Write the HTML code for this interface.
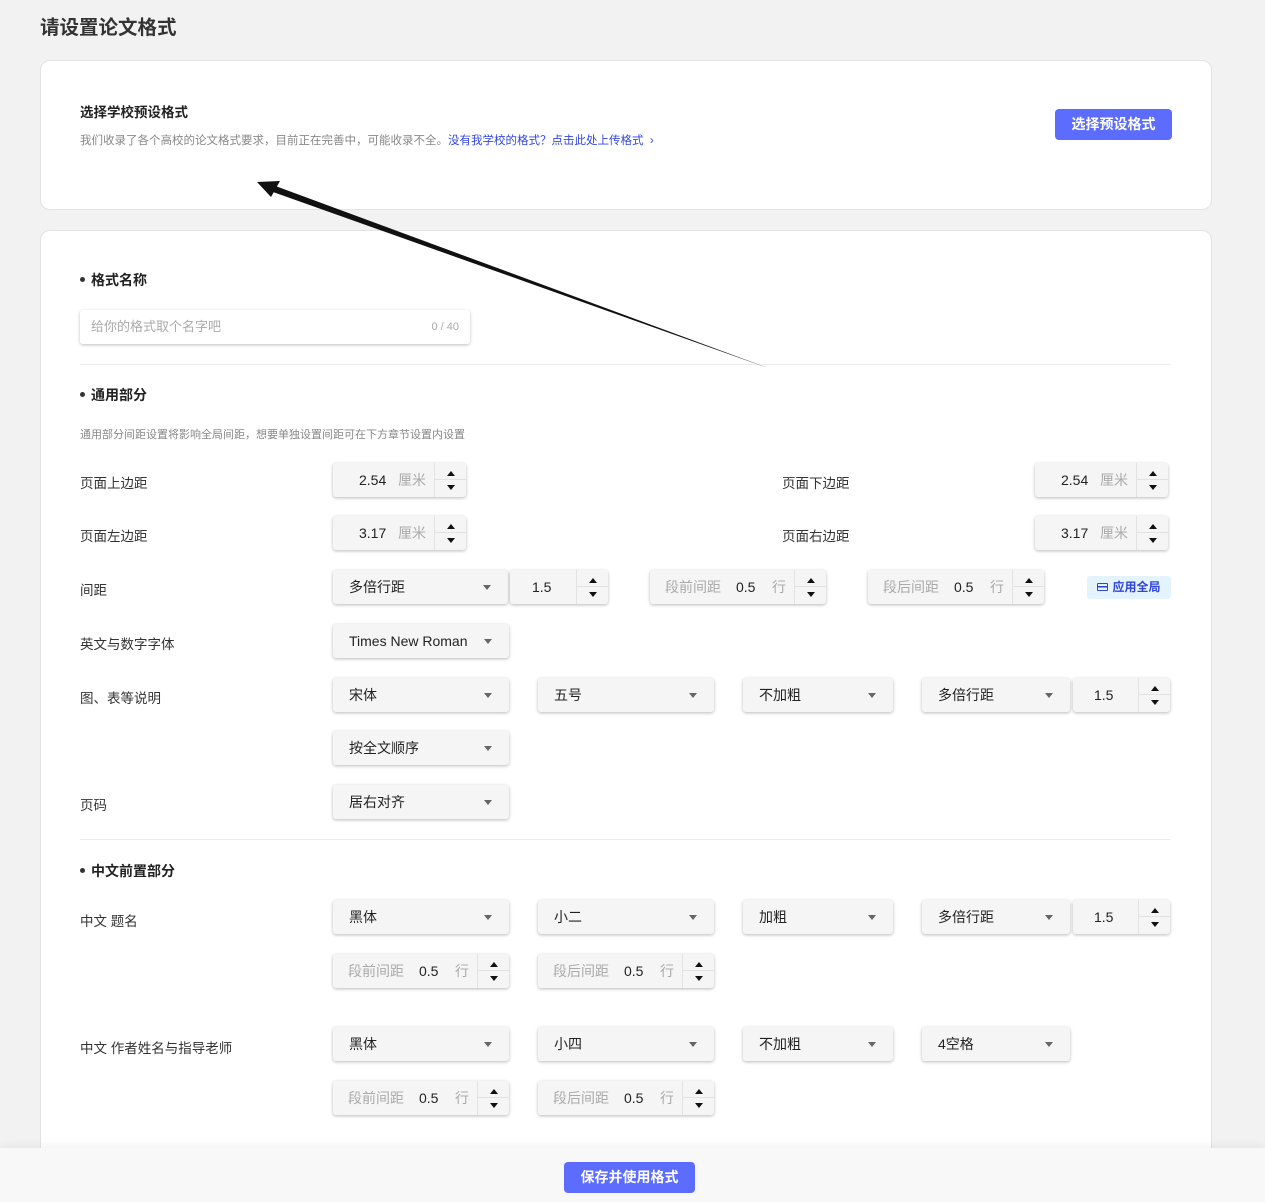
<!DOCTYPE html>
<html><head><meta charset="utf-8">
<style>
*{margin:0;padding:0;box-sizing:border-box}
html{width:1265px;height:1202px;overflow:hidden}
body{width:1265px;height:1202px;background:#f2f2f2;font-family:"Liberation Sans","Noto Sans CJK SC",sans-serif;position:relative;overflow:hidden;color:#333}
.a{position:absolute;white-space:nowrap}
.card{position:absolute;background:#fff;border:1px solid #e3e3e3;border-radius:10px}
.c{position:absolute;height:34px;background:#f5f5f5;box-shadow:0 1px 3px rgba(0,0,0,.28);border-radius:3px;font-size:14px;line-height:34px;color:#222;white-space:nowrap}
.s{padding-left:16px}
.s:after{content:"";position:absolute;right:17px;top:15px;border-left:4px solid transparent;border-right:4px solid transparent;border-top:5px solid #666}
.ar{position:absolute;right:0;top:0;width:32px;height:34px;border-left:1px solid #e2e2e2}
.ar:before{content:"";position:absolute;left:12px;top:8px;border-left:4px solid transparent;border-right:4px solid transparent;border-bottom:5px solid #111}
.ar:after{content:"";position:absolute;left:12px;top:22px;border-left:4px solid transparent;border-right:4px solid transparent;border-top:5px solid #111}
.ar i{position:absolute;left:0;right:0;top:16px;border-top:1px solid #e2e2e2}
.g{color:#aaa}
.lbl{position:absolute;left:80px;font-size:13.5px;color:#333;white-space:nowrap}
.h{position:absolute;left:80px;font-size:14px;font-weight:bold;color:#222}
.h:before{content:"";display:inline-block;width:5px;height:5px;border-radius:50%;background:#333;margin-right:6px;vertical-align:middle;position:relative;top:-2px}
.hr{position:absolute;left:80px;width:1091px;border-top:1px solid #ececec}
.btn{position:absolute;background:#5b6cff;color:#fff;font-weight:bold;font-size:14px;text-align:center;border-radius:4px}
</style></head><body>
<div class="a" style="left:40px;top:11px;font-size:19.5px;font-weight:bold;color:#333">请设置论文格式</div>

<div class="card" style="left:40px;top:60px;width:1172px;height:150px"></div>
<div class="a" style="left:80px;top:101px;font-size:13.5px;font-weight:bold;color:#222">选择学校预设格式</div>
<div class="a" style="left:80px;top:132px;font-size:11.5px;color:#888">我们收录了各个高校的论文格式要求，目前正在完善中，可能收录不全。<span style="color:#3346e0">没有我学校的格式？点击此处上传格式 &nbsp;›</span></div>
<div class="btn" style="left:1055px;top:109px;width:117px;height:31px;line-height:31px">选择预设格式</div>

<div class="card" style="left:40px;top:230px;width:1172px;height:985px"></div>

<div class="h" style="top:270px">格式名称</div>
<div class="a" style="left:80px;top:310px;width:390px;height:34px;background:#fff;border-radius:3px;box-shadow:0 1px 3px rgba(0,0,0,.25);font-size:13px;line-height:34px;color:#aaa;padding-left:11px">给你的格式取个名字吧<span style="position:absolute;right:11px;font-size:11px">0 / 40</span></div>
<div class="hr" style="top:364px"></div>

<div class="h" style="top:385px">通用部分</div>
<div class="a" style="left:80px;top:426px;font-size:11px;color:#888">通用部分间距设置将影响全局间距，想要单独设置间距可在下方章节设置内设置</div>

<div class="lbl" style="top:472px">页面上边距</div>
<div class="c" style="left:333px;top:463px;width:133px"><span class="a" style="left:26px">2.54</span><span class="a g" style="left:65px">厘米</span><div class="ar"><i></i></div></div>
<div class="lbl" style="left:782px;top:472px">页面下边距</div>
<div class="c" style="left:1035px;top:463px;width:133px"><span class="a" style="left:26px">2.54</span><span class="a g" style="left:65px">厘米</span><div class="ar"><i></i></div></div>

<div class="lbl" style="top:525px">页面左边距</div>
<div class="c" style="left:333px;top:516px;width:133px"><span class="a" style="left:26px">3.17</span><span class="a g" style="left:65px">厘米</span><div class="ar"><i></i></div></div>
<div class="lbl" style="left:782px;top:525px">页面右边距</div>
<div class="c" style="left:1035px;top:516px;width:133px"><span class="a" style="left:26px">3.17</span><span class="a g" style="left:65px">厘米</span><div class="ar"><i></i></div></div>

<div class="lbl" style="top:579px">间距</div>
<div class="c s" style="left:333px;top:570px;width:175px">多倍行距</div>
<div class="c" style="left:510px;top:570px;width:98px"><span class="a" style="left:22px">1.5</span><div class="ar"><i></i></div></div>
<div class="c" style="left:650px;top:570px;width:176px"><span class="a g" style="left:15px">段前间距</span><span class="a" style="left:86px">0.5</span><span class="a g" style="left:122px">行</span><div class="ar"><i></i></div></div>
<div class="c" style="left:868px;top:570px;width:176px"><span class="a g" style="left:15px">段后间距</span><span class="a" style="left:86px">0.5</span><span class="a g" style="left:122px">行</span><div class="ar"><i></i></div></div>
<div class="a" style="left:1087px;top:576px;width:84px;height:23px;background:#e4f4ff;border-radius:3px;color:#2f44d8;font-size:12px;font-weight:bold;line-height:23px;text-align:center"><span style="display:inline-block;width:11px;height:8px;border:1.5px solid #2f44d8;border-radius:1px;margin-right:4px;vertical-align:middle;position:relative;top:-1px;background:linear-gradient(#2f44d8,#2f44d8) center/100% 1.5px no-repeat"></span>应用全局</div>

<div class="lbl" style="top:633px">英文与数字字体</div>
<div class="c s" style="left:333px;top:624px;width:176px">Times New Roman</div>

<div class="lbl" style="top:687px">图、表等说明</div>
<div class="c s" style="left:333px;top:678px;width:176px">宋体</div>
<div class="c s" style="left:538px;top:678px;width:176px">五号</div>
<div class="c s" style="left:743px;top:678px;width:150px">不加粗</div>
<div class="c s" style="left:922px;top:678px;width:148px">多倍行距</div>
<div class="c" style="left:1073px;top:678px;width:97px"><span class="a" style="left:21px">1.5</span><div class="ar"><i></i></div></div>

<div class="c s" style="left:333px;top:731px;width:176px">按全文顺序</div>

<div class="lbl" style="top:794px">页码</div>
<div class="c s" style="left:333px;top:785px;width:176px">居右对齐</div>
<div class="hr" style="top:839px"></div>

<div class="h" style="top:861px">中文前置部分</div>

<div class="lbl" style="top:910px">中文 题名</div>
<div class="c s" style="left:333px;top:900px;width:176px">黑体</div>
<div class="c s" style="left:538px;top:900px;width:176px">小二</div>
<div class="c s" style="left:743px;top:900px;width:150px">加粗</div>
<div class="c s" style="left:922px;top:900px;width:148px">多倍行距</div>
<div class="c" style="left:1073px;top:900px;width:97px"><span class="a" style="left:21px">1.5</span><div class="ar"><i></i></div></div>
<div class="c" style="left:333px;top:954px;width:176px"><span class="a g" style="left:15px">段前间距</span><span class="a" style="left:86px">0.5</span><span class="a g" style="left:122px">行</span><div class="ar"><i></i></div></div>
<div class="c" style="left:538px;top:954px;width:176px"><span class="a g" style="left:15px">段后间距</span><span class="a" style="left:86px">0.5</span><span class="a g" style="left:122px">行</span><div class="ar"><i></i></div></div>

<div class="lbl" style="top:1037px">中文 作者姓名与指导老师</div>
<div class="c s" style="left:333px;top:1027px;width:176px">黑体</div>
<div class="c s" style="left:538px;top:1027px;width:176px">小四</div>
<div class="c s" style="left:743px;top:1027px;width:150px">不加粗</div>
<div class="c s" style="left:922px;top:1027px;width:148px">4空格</div>
<div class="c" style="left:333px;top:1081px;width:176px"><span class="a g" style="left:15px">段前间距</span><span class="a" style="left:86px">0.5</span><span class="a g" style="left:122px">行</span><div class="ar"><i></i></div></div>
<div class="c" style="left:538px;top:1081px;width:176px"><span class="a g" style="left:15px">段后间距</span><span class="a" style="left:86px">0.5</span><span class="a g" style="left:122px">行</span><div class="ar"><i></i></div></div>

<svg class="a" style="left:0;top:0" width="1265" height="1202">
<polygon points="270,184 768,368 273,192" fill="#111"/>
<polygon points="257,182 280,181 271,197" fill="#111"/>
</svg>

<div class="a" style="left:0;top:1148px;width:1265px;height:54px;background:#f8f8f8;box-shadow:0 -3px 8px rgba(0,0,0,.05)"></div>
<div class="btn" style="left:564px;top:1162px;width:131px;height:31px;line-height:31px">保存并使用格式</div>
</body></html>
